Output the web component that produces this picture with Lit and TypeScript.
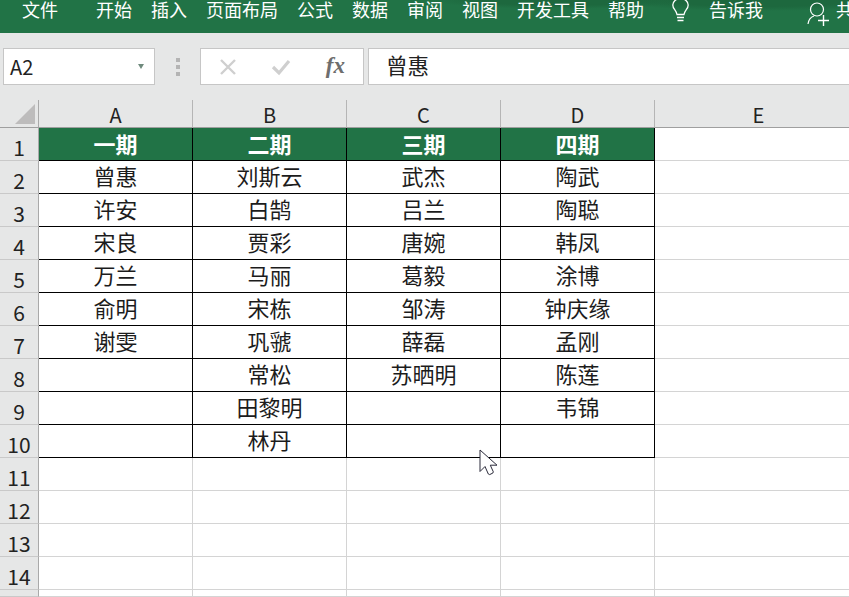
import { LitElement, html, css, svg } from "lit";
import { customElement } from "lit/decorators.js";

const COLS = ["A", "B", "C", "D", "E"];
const HEAD = ["一期", "二期", "三期", "四期"];
const DATA: string[][] = [
  ["曾惠", "刘斯云", "武杰", "陶武"],
  ["许安", "白鹄", "吕兰", "陶聪"],
  ["宋良", "贾彩", "唐婉", "韩凤"],
  ["万兰", "马丽", "葛毅", "涂博"],
  ["俞明", "宋栋", "邹涛", "钟庆缘"],
  ["谢雯", "巩虢", "薛磊", "孟刚"],
  ["", "常松", "苏晒明", "陈莲"],
  ["", "田黎明", "", "韦锦"],
  ["", "林丹", "", ""],
];
const TABS = ["开始", "插入", "页面布局", "公式", "数据", "审阅", "视图", "开发工具", "帮助"];

@customElement("app-root")
export class AppRoot extends LitElement {
  static styles = css`
    :host {
      display: block;
      width: 849px;
      height: 597px;
      overflow: hidden;
      position: relative;
      background: #fff;
      font-family: "Noto Sans CJK SC", "Noto Sans", sans-serif;
      color: #1a1a1a;
    }
    .ribbon {
      height: 33px;
      background:
        radial-gradient(ellipse 130px 9px at 560px 0, #1d683e 60%, transparent),
        radial-gradient(ellipse 150px 11px at 760px 0, #1d683e 60%, transparent),
        #217346;
      color: #fff;
      font-size: 18px;
      line-height: 18px;
      display: flex;
      align-items: flex-start;
      padding: 0 0 0 22px;
      gap: 19px;
      white-space: nowrap;
    }
    .ribbon > * { flex: none; }
    .ribbon span { display: block; }
    .file { margin-right: 19px; }
    .bulb { margin-left: 8px; display: block; }
    .account { margin-left: 25px; display: flex; gap: 5px; align-items: flex-start; }
    .account svg { display: block; flex: none; }
    .formula {
      height: 67px;
      background: #e6e7e7;
      box-sizing: border-box;
      padding: 15px 0 0 3px;
      display: flex;
      align-items: flex-start;
    }
    .box {
      height: 37px;
      box-sizing: border-box;
      background: #fff;
      border: 1px solid #c6c6c6;
      display: flex;
      align-items: center;
      flex: none;
    }
    .name {
      width: 152px;
      padding: 0 10px 0 6px;
      justify-content: space-between;
      font-size: 20px;
      color: #222;
    }
    .caret {
      width: 0;
      height: 0;
      border-left: 3.500px solid transparent;
      border-right: 3.500px solid transparent;
      border-top: 5px solid #6f8a7d;
    }
    .dots {
      width: 45px;
      flex: none;
      display: flex;
      flex-direction: column;
      align-items: center;
      gap: 3px;
      padding-top: 10px;
    }
    .dots i { width: 4px; height: 4px; background: #b4b4b4; display: block; }
    .btns {
      width: 164px;
      justify-content: space-between;
      padding: 0 18px;
    }
    .btns svg { display: block; }
    .fx {
      font-family: "Liberation Serif", serif;
      font-style: italic;
      font-weight: bold;
      font-size: 23px;
      color: #6e6e6e;
      padding-bottom: 2px;
    }
    .input {
      margin-left: 4px;
      flex: 1;
      border-right: 0;
      padding: 0 0 4px 17px;
      font-size: 21.500px;
      color: #222;
    }
    .grid {
      display: grid;
      grid-template-columns: 39px repeat(4, 154px) 207px;
      grid-template-rows: 28px repeat(14, 33px) 7px;
      background: #fff;
    }
    .corner, .ch, .rh { box-sizing: border-box; background: #e6e7e7; }
    .corner {
      border-right: 1px solid #a9a9a9;
      border-bottom: 1px solid #9f9f9f;
      position: relative;
    }
    .corner::after {
      content: "";
      position: absolute;
      right: 3px;
      bottom: 3px;
      border-left: 20px solid transparent;
      border-bottom: 20px solid #bdbcbc;
    }
    .ch {
      border-right: 1px solid #b5b5b5;
      border-bottom: 1px solid #9f9f9f;
      font-size: 20px;
      line-height: 30px;
      text-align: center;
      color: #222;
    }
    .ch.last { border-right: 0; }
    .rh {
      border-right: 1px solid #a9a9a9;
      border-bottom: 1px solid #c9c9c9;
      font-size: 21px;
      line-height: 39px;
      text-align: center;
      color: #222;
    }
    .cell {
      box-sizing: border-box;
      border-right: 1px solid #d4d4d4;
      border-bottom: 1px solid #d4d4d4;
      font-size: 22px;
      line-height: 29px;
      text-align: center;
      color: #1c1c1c;
      white-space: nowrap;
    }
    .cell.last { border-right: 0; }
    .cell.t { border-color: #000; }
    .cell.h {
      background: #217346;
      color: #fff;
      font-weight: 700;
      line-height: 31px;
      border-right-color: #000;
      border-bottom-color: #000;
    }
    .cursor { position: absolute; left: 479px; top: 449px; display: block; }
  `;

  private rowHead(n: number) {
    return html`<div class="rh">${n > 0 ? n : ""}</div>`;
  }

  render() {
    const rows = [];
    rows.push(html`${this.rowHead(1)}${HEAD.map((h) => html`<div class="cell h">${h}</div>`)}<div class="cell last"></div>`);
    DATA.forEach((r, i) => {
      rows.push(html`${this.rowHead(i + 2)}${r.map((c) => html`<div class="cell t">${c}</div>`)}<div class="cell last"></div>`);
    });
    for (let n = 11; n <= 15; n++) {
      rows.push(html`${this.rowHead(n === 15 ? 0 : n)}${[0, 1, 2, 3].map(() => html`<div class="cell"></div>`)}<div class="cell last"></div>`);
    }
    return html`
      <div class="ribbon">
        <span class="file">文件</span>
        ${TABS.map((t) => html`<span>${t}</span>`)}
        <svg class="bulb" width="19" height="23" viewBox="0 0 19 23" fill="none" stroke="#fff" stroke-width="1.300">
          <path d="M6 14.500c-.3-2-1.200-3.300-2.300-4.800C2.600 8.300 1.800 6.900 1.800 5 1.800 1.500 5.200-1.500 9.500-1.500s7.700 3 7.700 6.500c0 1.900-.8 3.300-1.900 4.700-1.100 1.500-2 2.800-2.300 4.800z"/>
          <path d="M6 17.500h7M6.500 20.500h6" stroke-width="1.600"/>
        </svg>
        <span>告诉我</span>
        <div class="account">
          <svg width="24" height="26" viewBox="0 0 24 26" fill="none" stroke="#fff" stroke-width="1.200">
            <circle cx="10" cy="9.500" r="6.500"/>
            <path d="M1 24c.5-4 3-7 6-8"/>
            <path d="M11 20.500h11M16.500 15v11" stroke-width="1.400"/>
          </svg>
          <span>共享</span>
        </div>
      </div>
      <div class="formula">
        <div class="box name"><span>A2</span><span class="caret"></span></div>
        <div class="dots"><i></i><i></i><i></i></div>
        <div class="box btns">
          <svg width="18" height="18" viewBox="0 0 18 18" stroke="#cfcfcf" stroke-width="2.400" fill="none"><path d="M2 2l14 14M16 2L2 16"/></svg>
          <svg width="20" height="18" viewBox="0 0 20 18" stroke="#cfcfcf" stroke-width="3.200" fill="none"><path d="M2 9l6 6L18 3"/></svg>
          <span class="fx">fx</span>
        </div>
        <div class="box input">曾惠</div>
      </div>
      <div class="grid">
        <div class="corner"></div>
        ${COLS.map((c, i) => html`<div class="ch ${i === 4 ? "last" : ""}">${c}</div>`)}
        ${rows}
      </div>
      ${svg`<svg class="cursor" width="22" height="28" viewBox="0 0 22 28"><path d="M1 1v21.500l5-5 3.300 7.500 1.300.6 3.200-1.500.5-1.300-3-6.600h6.700z" fill="#fff" stroke="#2a2a3a" stroke-width="1"/></svg>`}
    `;
  }
}
